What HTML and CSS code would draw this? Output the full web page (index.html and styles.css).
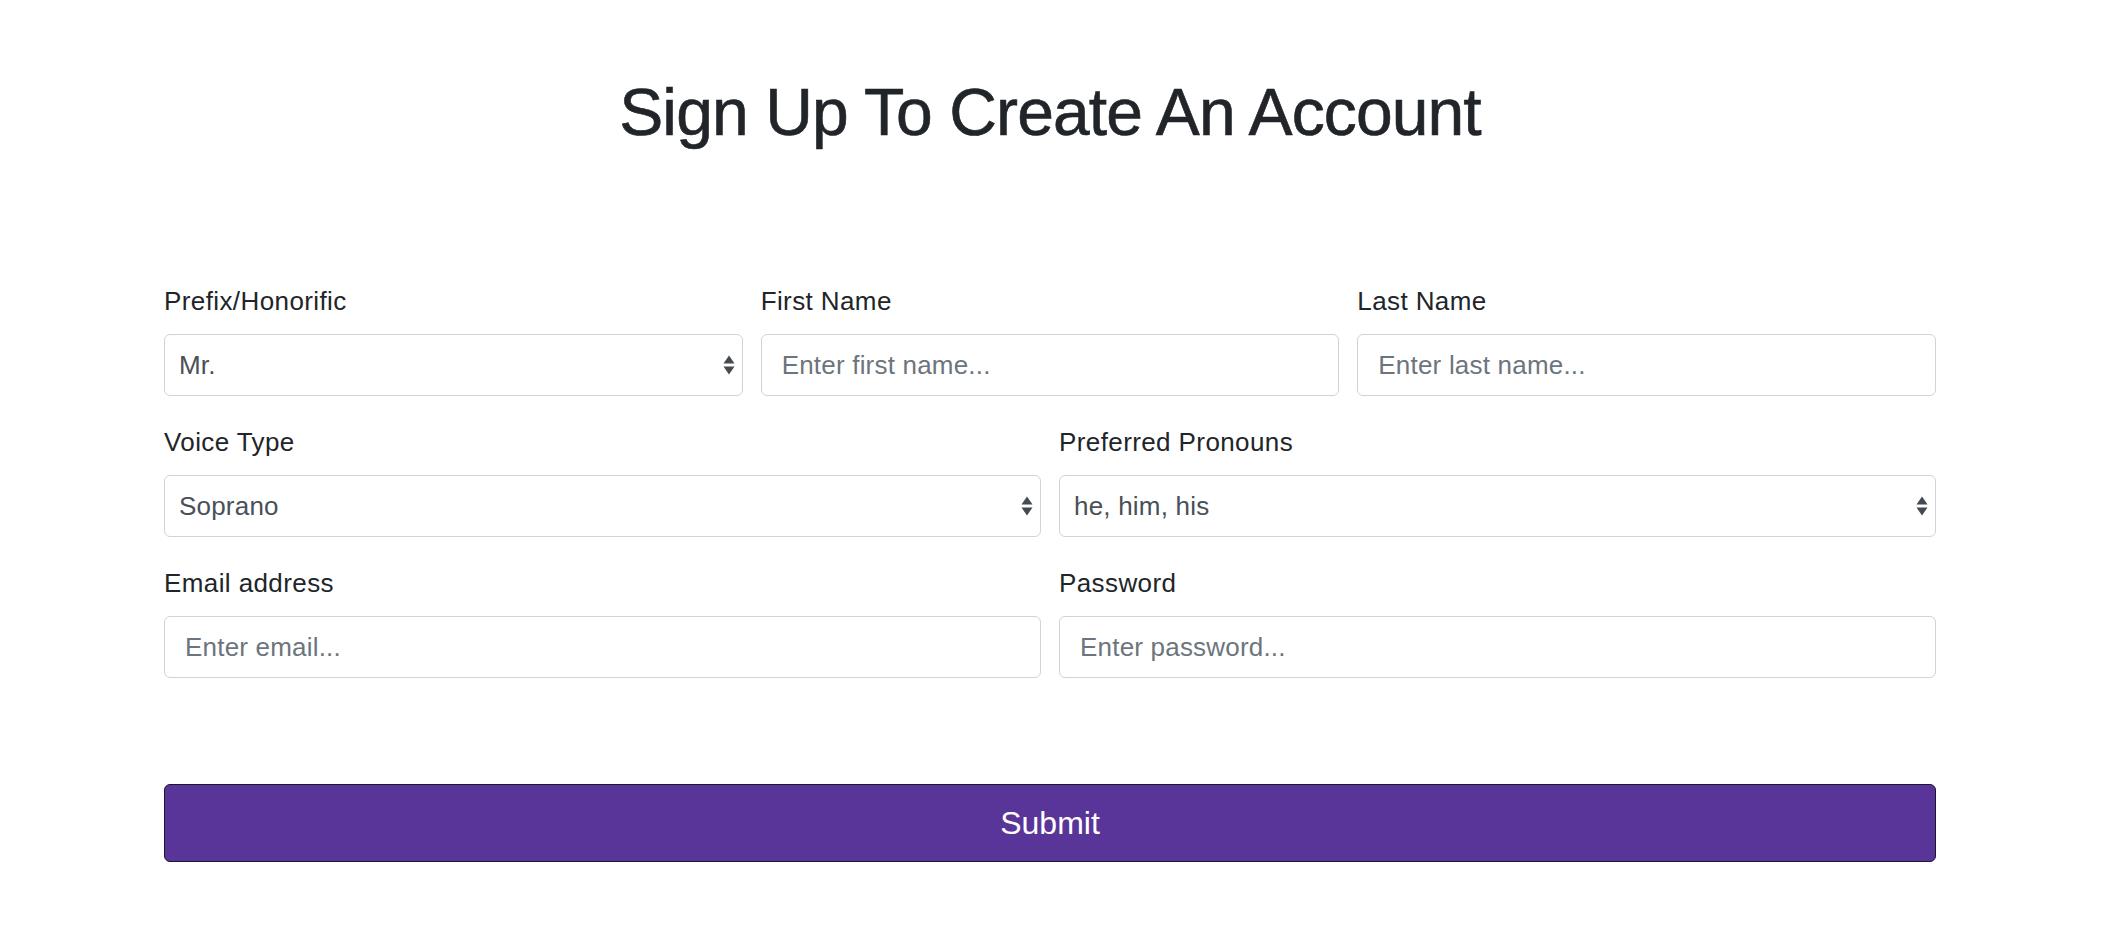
FILE: index.html
```html
<!DOCTYPE html>
<html lang="en">
<head>
<meta charset="utf-8">
<title>Sign Up</title>
<link rel="stylesheet" href="styles.css">
</head>
<body>
<main class="page">
  <h1 class="title">Sign Up To Create An Account</h1>
  <form class="signup">
    <div class="row row-3">
      <div class="field">
        <label class="label" for="prefix">Prefix/Honorific</label>
        <div class="select-wrap">
          <select id="prefix" class="control select"><option>Mr.</option><option>Ms.</option><option>Mx.</option><option>Dr.</option></select>
          <svg class="arrows" width="12" height="22" viewBox="0 0 12 22"><path d="M6 1.5 L11.5 9.5 H0.5 Z M0.5 12.5 H11.5 L6 20.5 Z" fill="#454a50"/></svg>
        </div>
      </div>
      <div class="field">
        <label class="label" for="first">First Name</label>
        <input id="first" class="control input" type="text" placeholder="Enter first name...">
      </div>
      <div class="field">
        <label class="label" for="last">Last Name</label>
        <input id="last" class="control input" type="text" placeholder="Enter last name...">
      </div>
    </div>
    <div class="row row-2">
      <div class="field">
        <label class="label" for="voice">Voice Type</label>
        <div class="select-wrap">
          <select id="voice" class="control select"><option>Soprano</option><option>Alto</option><option>Tenor</option><option>Bass</option></select>
          <svg class="arrows" width="12" height="22" viewBox="0 0 12 22"><path d="M6 1.5 L11.5 9.5 H0.5 Z M0.5 12.5 H11.5 L6 20.5 Z" fill="#454a50"/></svg>
        </div>
      </div>
      <div class="field">
        <label class="label" for="pronouns">Preferred Pronouns</label>
        <div class="select-wrap">
          <select id="pronouns" class="control select"><option>he, him, his</option><option>she, her, hers</option><option>they, them, theirs</option></select>
          <svg class="arrows" width="12" height="22" viewBox="0 0 12 22"><path d="M6 1.5 L11.5 9.5 H0.5 Z M0.5 12.5 H11.5 L6 20.5 Z" fill="#454a50"/></svg>
        </div>
      </div>
    </div>
    <div class="row row-2">
      <div class="field">
        <label class="label" for="email">Email address</label>
        <input id="email" class="control input" type="email" placeholder="Enter email...">
      </div>
      <div class="field">
        <label class="label" for="password">Password</label>
        <input id="password" class="control input" type="password" placeholder="Enter password...">
      </div>
    </div>
    <button class="submit" type="submit">Submit</button>
  </form>
</main>
</body>
</html>
```

FILE: styles.css
```css
* { box-sizing: border-box; }

html, body {
  margin: 0;
  padding: 0;
  background: #ffffff;
}

body {
  font-family: "Liberation Sans", Arial, sans-serif;
  color: #212529;
}

.page {
  width: 1772px;
  margin-left: 164px;
  padding-top: 73px;
}

.title {
  margin: 0;
  font-size: 66px;
  line-height: 1.2;
  font-weight: 400;
  letter-spacing: -0.9px;
  -webkit-text-stroke: 0.6px #212529;
  text-align: center;
  color: #212529;
}

.signup {
  margin-top: 131px;
  display: flex;
  flex-direction: column;
}

.row {
  display: grid;
  column-gap: 18px;
  margin-bottom: 28px;
}

.row-3 { grid-template-columns: repeat(3, 1fr); }
.row-2 { grid-template-columns: repeat(2, 1fr); }

.field {
  display: flex;
  flex-direction: column;
}

.label {
  font-size: 26px;
  line-height: 37px;
  letter-spacing: 0.4px;
  margin-bottom: 14px;
  color: #212529;
}

.control {
  width: 100%;
  height: 62px;
  border: 1px solid #ced4da;
  border-radius: 6px;
  background: #ffffff;
  font-family: "Liberation Sans", Arial, sans-serif;
  font-size: 26px;
  letter-spacing: 0.2px;
  color: #495057;
  margin: 0;
  outline: none;
}

.input {
  padding: 0 20px;
}

.input::placeholder {
  color: #6c757d;
  opacity: 1;
}

.select-wrap {
  position: relative;
}

.select {
  appearance: none;
  -webkit-appearance: none;
  padding: 0 40px 0 14px;
  display: block;
}

.arrows {
  position: absolute;
  right: 8px;
  top: 20px;
  pointer-events: none;
}

.submit {
  margin-top: 78px;
  height: 78px;
  width: 100%;
  background: #5a3599;
  color: #ffffff;
  border: 1px solid #1c1530;
  border-radius: 6px;
  font-family: "Liberation Sans", Arial, sans-serif;
  font-size: 32px;
  line-height: 1.5;
  cursor: pointer;
}
```
